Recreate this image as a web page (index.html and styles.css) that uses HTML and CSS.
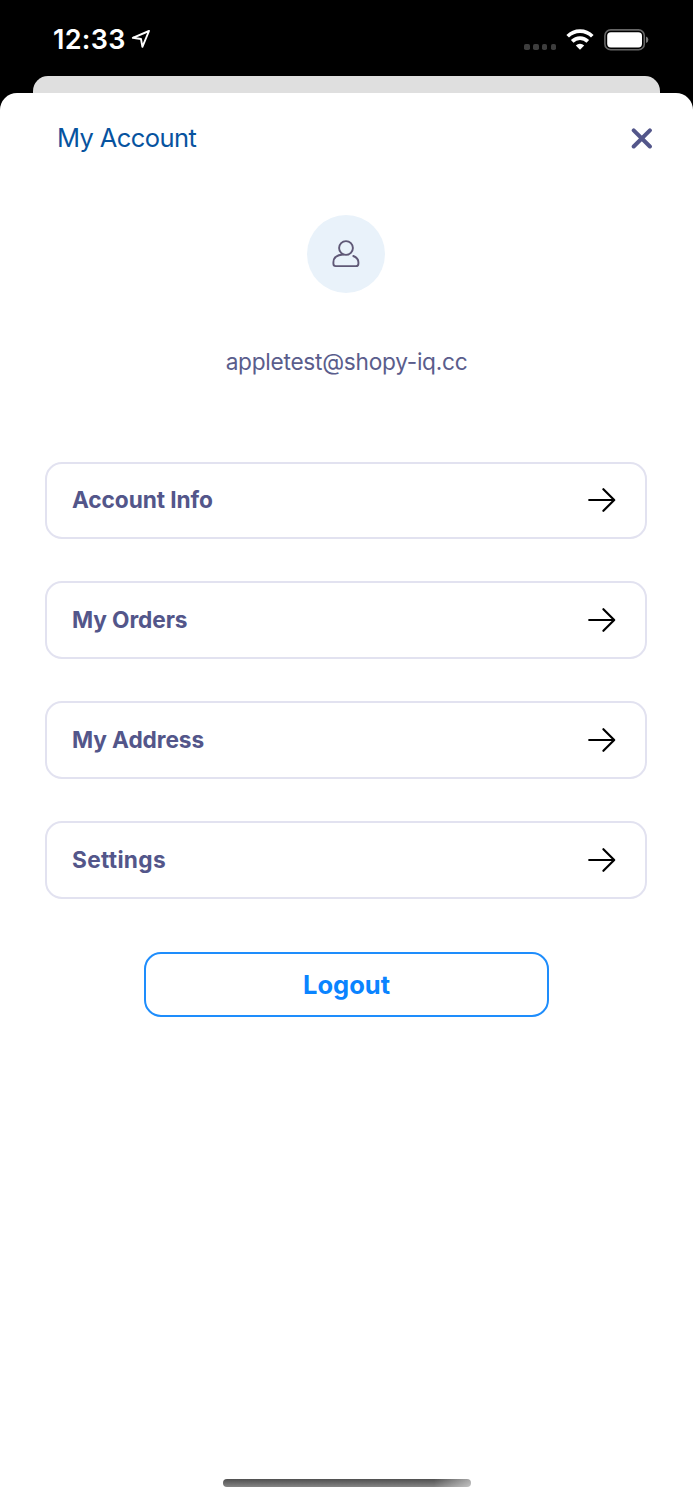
FILE: index.html
```
<!DOCTYPE html>
<html lang="en">
<head>
<meta charset="utf-8">
<title>My Account</title>
<link rel="stylesheet" href="styles.css">
</head>
<body>
<div class="phone">
  <header class="status">
    <div class="status-left">
      <span class="time">12:33</span>
      <svg class="location" width="20" height="20" viewBox="0 0 20 20"><path d="M18 2 L1.8 8.8 L10 10 L11.4 17.8 Z" fill="none" stroke="#fff" stroke-width="1.9" stroke-linejoin="round"/></svg>
    </div>
    <div class="status-right">
      <div class="signal"><i></i><i></i><i></i><i></i></div>
      <svg class="wifi" width="28" height="21" viewBox="0 0 28 21"><g fill="none" stroke="#fff" stroke-width="3.7"><path d="M1.7 7.2 A17.5 17.5 0 0 1 26.3 7.2"/><path d="M6.2 12.4 A11 11 0 0 1 21.8 12.4"/></g><path d="M14 20.8 L9.8 16.5 A6.2 6.2 0 0 1 18.2 16.5 Z" fill="#fff"/></svg>
      <svg class="battery" width="46" height="22" viewBox="0 0 46 22"><rect x=".9" y=".9" width="39.4" height="19.8" rx="5.8" fill="none" stroke="#666" stroke-width="1.6"/><rect x="3.2" y="3.2" width="34.8" height="15.2" rx="3.6" fill="#fff"/><path d="M42 7.5 Q44.4 8.3 44.4 10.8 Q44.4 13.3 42 14.1 Z" fill="#777"/></svg>
    </div>
  </header>
  <div class="sheet-behind"></div>
  <main class="sheet">
    <div class="titlebar">
      <h1 class="title">My Account</h1>
      <svg class="close" width="22" height="22" viewBox="0 0 22 22"><path d="M2.7 2.3 L18.9 18.5 M18.9 2.3 L2.7 18.5" stroke="#53568a" stroke-width="4" stroke-linecap="round"/></svg>
    </div>
    <div class="avatar">
      <svg width="28" height="28" viewBox="0 0 28 28"><g fill="none" stroke="#5f5876" stroke-width="1.9" stroke-linecap="round"><circle cx="14" cy="8" r="6.9"/><path d="M11 14.5 C5 15 1.4 17.7 1.4 22.2 V23.8 Q1.4 26.1 3.7 26.1 H24 Q26.4 26.1 26.4 23.7 V22.2 Q26.4 18 21.3 16"/></g></svg>
    </div>
    <p class="email">appletest@shopy-iq.cc</p>
    <nav class="menu">
      <div class="item"><span class="label info">Account Info</span><svg class="arrow" width="28" height="26" viewBox="0 0 28 26"><path d="M1.2 13 H26 M15.4 2.2 L26.2 13 L15.4 23.8"/></svg></div>
      <div class="item"><span class="label orders">My Orders</span><svg class="arrow" width="28" height="26" viewBox="0 0 28 26"><path d="M1.2 13 H26 M15.4 2.2 L26.2 13 L15.4 23.8"/></svg></div>
      <div class="item"><span class="label address">My Address</span><svg class="arrow" width="28" height="26" viewBox="0 0 28 26"><path d="M1.2 13 H26 M15.4 2.2 L26.2 13 L15.4 23.8"/></svg></div>
      <div class="item"><span class="label settings">Settings</span><svg class="arrow" width="28" height="26" viewBox="0 0 28 26"><path d="M1.2 13 H26 M15.4 2.2 L26.2 13 L15.4 23.8"/></svg></div>
    </nav>
    <div class="logout"><span class="logout-text">Logout</span></div>
    <div class="home"></div>
  </main>
</div>
</body>
</html>
```
FILE: styles.css
```
* { box-sizing: border-box; }
body { margin: 0; background: #000; font-family: Inter, "Liberation Sans", sans-serif; }
.phone { width: 693px; height: 1500px; overflow: hidden; display: flex; flex-direction: column; }
.status { height: 76px; flex: none; display: flex; justify-content: space-between; padding: 0 43px 0 53px; }
.status-left { display: flex; align-items: flex-start; }
.time { color: #fff; font-size: 27px; font-weight: 600; line-height: 34px; margin-top: 23px; width: 78px; letter-spacing: 0.3px; white-space: nowrap; }
.location { margin-top: 29px; }
.status-right { display: flex; align-items: flex-start; }
.signal { display: flex; gap: 3.2px; margin: 44px 10px 0 0; }
.signal i { width: 5.5px; height: 5.5px; border-radius: 1.8px; background: #3d3d3d; }
.wifi { margin: 28.5px 10px 0 0; }
.battery { margin-top: 28.5px; }
.sheet-behind { height: 17px; flex: none; margin: 0 33px; background: #dfdfdf; border-radius: 15px 15px 0 0; }
.sheet { flex: 1; background: #fff; border-radius: 17px 17px 0 0; display: flex; flex-direction: column; align-items: center; }
.titlebar { width: 100%; height: 91px; display: flex; justify-content: space-between; align-items: center; padding: 0 40px 0 57px; }
.title { margin: 0; font-size: 25.5px; font-weight: 400; line-height: 32px; color: #07539f; letter-spacing: -0.6px; padding-bottom: 1px; }
.avatar { width: 78px; height: 78px; margin: 31px 1px 0 0; border-radius: 50%; background: #e9f2fa; display: flex; align-items: center; justify-content: center; }
.email { margin: 53px 0 0; font-size: 22.7px; line-height: 32px; color: #5a5d8c; letter-spacing: -0.28px; }
.menu { width: 602px; margin: 83.7px 1px 0 0; display: flex; flex-direction: column; gap: 42.3px; }
.item { height: 77.5px; border: 2px solid #e2e2f0; border-radius: 17px; display: flex; align-items: center; justify-content: space-between; padding: 0 29px 0 25px; }
.label { font-size: 22.7px; font-weight: 650; color: #53568a; letter-spacing: -0.1px; padding-bottom: 1px; }
.settings { letter-spacing: 0.3px; }
.arrow { fill: none; stroke: #000; stroke-width: 2.2; stroke-linecap: round; stroke-linejoin: round; }
.logout { width: 405px; height: 65px; margin-top: 53.6px; border: 2px solid #1e8dfc; border-radius: 17px; display: flex; align-items: center; justify-content: center; }
.logout-text { font-size: 25.5px; font-weight: 700; color: #0a84ff; letter-spacing: 0; }
.home { width: 248px; height: 8px; margin: auto 0 13px; border-radius: 4px; background: linear-gradient(90deg, transparent 85%, rgba(255,255,255,.5)), linear-gradient(#505050, #858585); }
```
